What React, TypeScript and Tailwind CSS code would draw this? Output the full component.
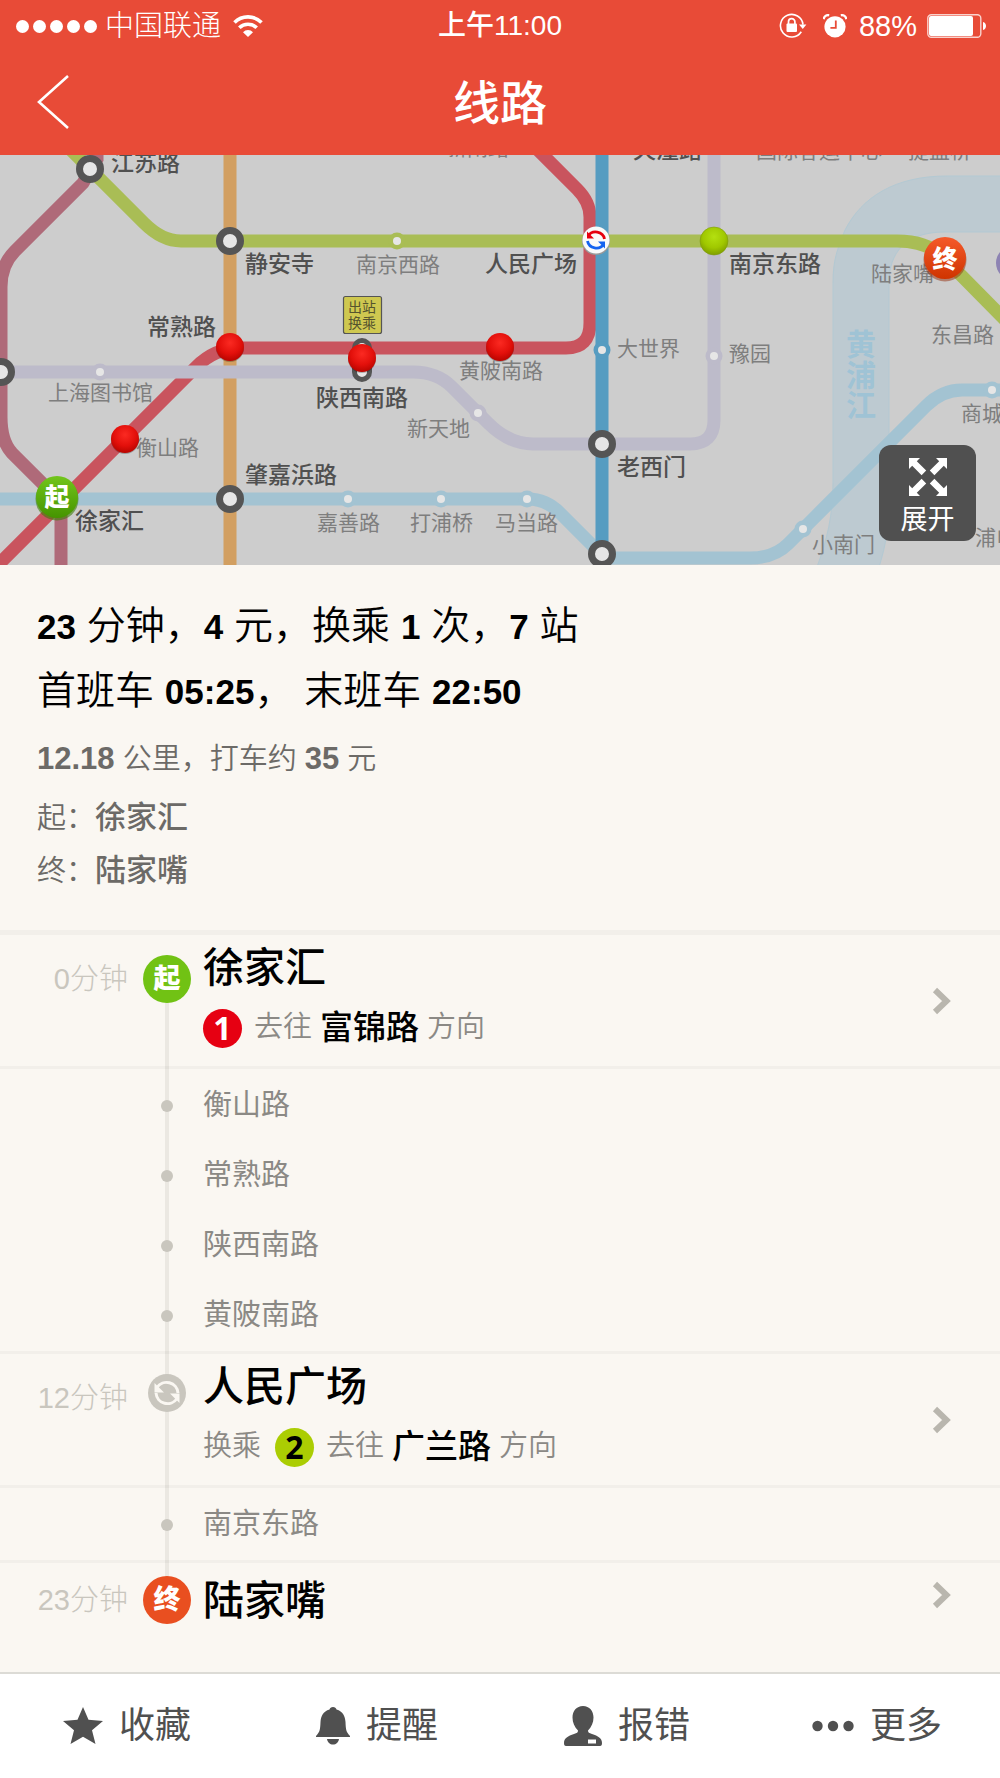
import type { ReactNode } from "react";

const GREEN = "#a9bd55";
const RED = "#c9545e";
const LAVENDER = "#bdbbca";
const SKY = "#a3c3d2";
const BLUE = "#569cc1";

const INTERCHANGES = [
  { x: 90, y: 14 },
  { x: 230, y: 86 },
  { x: 230, y: 344 },
  { x: 602, y: 289 },
  { x: 602, y: 399 },
  { x: 1, y: 217 },
];

const STATIONS = [
  { x: 397, y: 86, color: GREEN },
  { x: 100, y: 217, color: LAVENDER },
  { x: 478, y: 258, color: LAVENDER },
  { x: 714, y: 201, color: LAVENDER },
  { x: 348, y: 344, color: SKY },
  { x: 441, y: 344, color: SKY },
  { x: 527, y: 344, color: SKY },
  { x: 803, y: 374, color: SKY },
  { x: 992, y: 235, color: SKY },
  { x: 602, y: 195, color: BLUE },
];

const RED_BALLS = [
  { x: 125, y: 284 },
  { x: 230, y: 192 },
  { x: 362, y: 203 },
  { x: 500, y: 192 },
];

const MAJOR_LABELS = [
  { name: "江苏路", x: 111, y: 16 },
  { name: "静安寺", x: 245, y: 117 },
  { name: "常熟路", x: 147, y: 180 },
  { name: "陕西南路", x: 316, y: 251 },
  { name: "肇嘉浜路", x: 245, y: 328 },
  { name: "徐家汇", x: 75, y: 374 },
  { name: "人民广场", x: 485, y: 117 },
  { name: "南京东路", x: 729, y: 117 },
  { name: "老西门", x: 617, y: 320 },
  { name: "天潼路", x: 633, y: 3 },
];

const MINOR_LABELS = [
  { name: "新闸路", x: 446, y: 0 },
  { name: "国际客运中心", x: 756, y: 3 },
  { name: "提篮桥", x: 908, y: 3 },
  { name: "南京西路", x: 356, y: 117 },
  { name: "上海图书馆", x: 48, y: 245 },
  { name: "衡山路", x: 136, y: 300 },
  { name: "黄陂南路", x: 459, y: 223 },
  { name: "新天地", x: 407, y: 281 },
  { name: "嘉善路", x: 317, y: 375 },
  { name: "打浦桥", x: 410, y: 375 },
  { name: "马当路", x: 495, y: 375 },
  { name: "大世界", x: 617, y: 201 },
  { name: "豫园", x: 729, y: 206 },
  { name: "陆家嘴", x: 871, y: 126 },
  { name: "东昌路", x: 931, y: 187 },
  { name: "商城路", x: 961, y: 266 },
  { name: "小南门", x: 812, y: 397 },
  { name: "浦电路", x: 975, y: 390 },
];

function StatusBar() {
  return (
    <div className="grid h-[52px] grid-cols-[1fr_auto_1fr] items-center px-3.5 text-[29px] leading-none">
      <div className="flex items-center pl-0.5">
        <div className="flex gap-1">
          {[0, 1, 2, 3, 4].map((i) => (
            <span key={i} className="h-[13px] w-[13px] rounded-full bg-white" />
          ))}
        </div>
        <span className="ml-2 font-light">中国联通</span>
        <svg className="ml-3" width="30" height="22" viewBox="0 0 30 22" fill="none" stroke="#fff" strokeWidth="3.6">
          <path d="M1.5 7.5a19 19 0 0 1 27 0" />
          <path d="M6.3 12.8a12.3 12.3 0 0 1 17.4 0" />
          <path d="M10 17.2a7 7 0 0 1 10 0L15 22z" fill="#fff" stroke="none" />
        </svg>
      </div>
      <span className="text-[28px] font-medium">上午11:00</span>
      <div className="flex items-center justify-end">
        <svg width="28" height="26" viewBox="0 0 28 26" fill="none" stroke="#fff" strokeWidth="1.6">
          <path d="M22.3 18.8A11.3 11.3 0 1 1 24 11.6" />
          <path d="M20 11.5h7.4L23.8 16z" fill="#fff" stroke="none" />
          <rect x="7.5" y="10.5" width="10.5" height="8.5" rx="1" fill="#fff" stroke="none" />
          <path d="M9.5 11V8.8a3.2 3.2 0 0 1 6.4 0V11" strokeWidth="1.7" />
        </svg>
        <svg className="ml-4" width="24" height="24" viewBox="0 0 24 24">
          <circle cx="12" cy="12.8" r="10.6" fill="#fff" />
          <path d="M.6 5.2A5 5 0 0 1 6.2 1.2M17.8 1.2a5 5 0 0 1 5.6 4" fill="none" stroke="#fff" strokeWidth="2.4" />
          <path d="M12.8 6.5v7.3H7.4" fill="none" stroke="#e84b37" strokeWidth="1.8" />
        </svg>
        <span className="ml-3">88%</span>
        <svg className="ml-2.5" width="59" height="24" viewBox="0 0 59 24">
          <rect x=".8" y=".8" width="53" height="22.4" rx="3.5" fill="none" stroke="#fff" strokeOpacity=".75" strokeWidth="1.4" />
          <rect x="2" y="2" width="44" height="20" rx="2" fill="#fff" />
          <path d="M56 8c4 1 4 7 0 8z" fill="#fff" />
        </svg>
      </div>
    </div>
  );
}

function Header() {
  return (
    <header className="bg-[#e84b37] text-white">
      <StatusBar />
      <div className="grid h-[103px] grid-cols-[1fr_auto_1fr] items-center px-9">
        <button aria-label="返回" className="justify-self-start">
          <svg width="34" height="58" viewBox="0 0 34 58" fill="none" stroke="#fff" strokeWidth="2.6">
            <path d="M32 1 3 27l29 26" />
          </svg>
        </button>
        <h1 className="text-[47px] leading-none font-medium">线路</h1>
      </div>
    </header>
  );
}

function MetroMap() {
  return (
    <div className="relative h-[410px] overflow-hidden bg-[#cdcdcd]">
      <svg className="block h-full w-full" viewBox="0 0 1000 410" preserveAspectRatio="xMidYMid slice">
        <defs>
          <radialGradient id="redBall" cx="50%" cy="35%" r="65%">
            <stop offset="0" stopColor="#fb2a22" />
            <stop offset=".6" stopColor="#e3100b" />
            <stop offset="1" stopColor="#b80500" />
          </radialGradient>
          <radialGradient id="limeBall" cx="50%" cy="35%" r="65%">
            <stop offset="0" stopColor="#b4e010" />
            <stop offset=".6" stopColor="#a0c800" />
            <stop offset="1" stopColor="#7f9e00" />
          </radialGradient>
          <linearGradient id="startBall" x1="0" y1="0" x2="0" y2="1">
            <stop offset="0" stopColor="#72c51c" />
            <stop offset="1" stopColor="#459400" />
          </linearGradient>
          <linearGradient id="endBall" x1="0" y1="0" x2="0" y2="1">
            <stop offset="0" stopColor="#f55a2a" />
            <stop offset="1" stopColor="#cf3400" />
          </linearGradient>
        </defs>

        {/* river */}
        <path
          d="M1010 21H947C895 21 862 42 845 75 837 95 833 105 833 128V328C833 360 827 385 817 412H879C886 390 889 370 889 348V128C889 98 905 77 945 77H1010z"
          fill="#bdcad1"
          stroke="#b3c9d3"
        />
        <g fill="#9fc3d5" fontSize="30" fontWeight="700" textAnchor="middle">
          <text x="861" y="200">黄</text>
          <text x="861" y="231">浦</text>
          <text x="861" y="261">江</text>
        </g>

        {/* lines */}
        <g fill="none" strokeWidth="13">
          <path d="M97-10V4L83 28 15 96Q1 110 1 132V262Q1 286 12 298L61 347V420" stroke="#af6a79" />
          <path d="M230-10V420" stroke="#d29f61" />
          <path d="M-10 344H528Q546 344 560 358L605 403H750Q774 403 788 389L926 251Q942 235 962 235H1010" stroke={SKY} />
          <path d="M-12 420L196 212Q215 193 240 193H566Q590 193 590 168V62Q590 47 577 34L535-8" stroke={RED} />
          <path d="M0 217H413Q437 217 452 232L488 268Q509 289 533 289H690Q714 289 714 265V-10" stroke={LAVENDER} />
          <path d="M602-10V400" stroke={BLUE} />
          <path d="M66-10L144 68Q162 86 181 86H897Q926 86 942 101L1010 170" stroke={GREEN} />
        </g>
        <circle cx="1013" cy="108" r="17" fill="#8d83b3" />

        {/* stations */}
        {STATIONS.map((s) => (
          <g key={`${s.x}-${s.y}`}>
            <circle cx={s.x} cy={s.y} r="8.5" fill={s.color} />
            <circle cx={s.x} cy={s.y} r="4" fill="#e6e6e6" />
          </g>
        ))}
        {INTERCHANGES.map((s) => (
          <circle key={`${s.x}-${s.y}`} cx={s.x} cy={s.y} r="10.5" fill="#e6e6e6" stroke="#555" strokeWidth="7" />
        ))}
        <rect x="354.5" y="185.5" width="15" height="39" rx="7.5" fill="#e6e6e6" stroke="#555" strokeWidth="5" />

        <g fill="#505050" fontSize="23" fontWeight="500">
          {MAJOR_LABELS.map((l) => (
            <text key={l.name} x={l.x} y={l.y}>{l.name}</text>
          ))}
        </g>
        <g fill="#7e7e7e" fontSize="21">
          {MINOR_LABELS.map((l) => (
            <text key={l.name} x={l.x} y={l.y}>{l.name}</text>
          ))}
        </g>

        {/* out-of-station transfer tag */}
        <rect x="343.5" y="141.5" width="38" height="37" rx="2" fill="#cfc850" stroke="#555" strokeWidth="1.2" />
        <g fill="#55542e" fontSize="14" textAnchor="middle">
          <text x="362" y="157">出站</text>
          <text x="362" y="173">换乘</text>
        </g>

        {/* the chosen route */}
        {RED_BALLS.map((b) => (
          <g key={b.x}>
            <circle cx={b.x} cy={b.y + 1} r="14" fill="#000" fillOpacity=".25" />
            <circle cx={b.x} cy={b.y} r="14" fill="url(#redBall)" />
          </g>
        ))}
        <circle cx="714" cy="86" r="14" fill="url(#limeBall)" stroke="#7f9a10" strokeWidth=".6" />
        <circle cx="596" cy="86" r="14" fill="#999" />
        <circle cx="596" cy="85" r="13.5" fill="#fafafa" />
        <path d="M588 81a9 8.5 0 0 1 16.5 3" fill="none" stroke="#e6000f" strokeWidth="2.8" />
        <path d="M587 76.5v7h7z" fill="#e6000f" />
        <path d="M604 89a9 8.5 0 0 1-16.5-3" fill="none" stroke="#1463f0" strokeWidth="2.8" />
        <path d="M605 93.500v-7h-7z" fill="#1463f0" />
        <circle cx="57" cy="344" r="21.5" fill="#3d7d08" fillOpacity=".6" />
        <circle cx="57" cy="342" r="21" fill="url(#startBall)" />
        <circle cx="945" cy="105" r="21.5" fill="#96300e" fillOpacity=".5" />
        <circle cx="945" cy="103" r="21" fill="url(#endBall)" />
        <g fill="#fff" fontSize="25" fontWeight="900" textAnchor="middle">
          <text x="57" y="351">起</text>
          <text x="945" y="113">终</text>
        </g>
      </svg>

      <button className="absolute right-6 bottom-6 flex h-24 w-[97px] flex-col items-center justify-center gap-2 rounded-xl bg-[#505050] pt-2 text-[27px] leading-8 text-white">
        <svg width="38" height="38" viewBox="0 0 38 38" fill="#fff">
          {[0, 90, 180, 270].map((deg) => (
            <path key={deg} d="M0 0h11L7.800 3.200 17.200 12.600 12.600 17.200 3.200 7.800 0 11z" transform={`rotate(${deg} 19 19)`} />
          ))}
        </svg>
        展开
      </button>
    </div>
  );
}

function Num({ children }: { children: ReactNode }) {
  return <b className="text-[35px] font-bold">{children}</b>;
}

function Summary() {
  return (
    <section className="border-b-5 border-[#f2efea] px-[37px] pt-7 pb-[33px] text-[29px] font-[350] text-[#6c6a67]">
      <p className="h-[65px] text-[39px] leading-[65px] text-black">
        <Num>23</Num> 分钟，<Num>4</Num> 元，换乘 <Num>1</Num> 次，<Num>7</Num> 站
      </p>
      <p className="h-[65px] text-[39px] leading-[65px] text-black">
        首班车 <Num>05:25</Num>， 末班车 <Num>22:50</Num>
      </p>
      <p className="mt-2.5 h-[52px] leading-[52px]">
        <b className="text-[31px] font-bold">12.18</b> 公里，打车约 <b className="text-[31px] font-bold">35</b> 元
      </p>
      <p className="mt-1.5 h-[53px] leading-[53px]">
        起：<b className="text-[31px] font-medium">徐家汇</b>
      </p>
      <p className="h-[53px] leading-[53px]">
        终：<b className="text-[31px] font-medium">陆家嘴</b>
      </p>
    </section>
  );
}

function Pill({ children, className }: { children: ReactNode; className: string }) {
  return (
    <span className={`flex h-12 w-12 items-center justify-center rounded-full text-[27px] leading-none font-black text-white ${className}`}>
      {children}
    </span>
  );
}

function LineNo({ children, className }: { children: ReactNode; className: string }) {
  return (
    <span className={`flex h-[39px] w-[39px] shrink-0 items-center justify-center rounded-full font-['Noto_Sans',sans-serif] text-[32px] leading-none font-bold ${className}`}>
      {children}
    </span>
  );
}

function TransferIcon() {
  return (
    <svg className="mx-auto" width="38" height="38" viewBox="0 0 38 38">
      <circle cx="19" cy="19" r="19" fill="#c9c6be" />
      <g fill="none" stroke="#faf7f2" strokeWidth="3">
        <path d="M9 13.500a11.500 11.500 0 0 1 21 5.500" />
        <path d="M29 24.500a11.500 11.500 0 0 1-21-5.500" />
      </g>
      <path d="M6.500 9v9.500H16z" fill="#faf7f2" />
      <path d="M31.500 29V19.500H22z" fill="#faf7f2" />
    </svg>
  );
}

function Chevron() {
  return (
    <svg width="20" height="28" viewBox="0 0 20 28" fill="none" stroke="#b9b6ae" strokeWidth="6">
      <path d="M3 3l11.500 11L3 25" />
    </svg>
  );
}

interface StationRowProps {
  time: string;
  icon: ReactNode;
  name: string;
  last?: boolean;
  children?: ReactNode;
}

function StationRow({ time, icon, name, last, children }: StationRowProps) {
  return (
    <li className={last ? "h-[109px]" : "h-[134px] border-b-3 border-black/3"}>
      <a href="#" className="flex h-full">
        <span className={`w-32 shrink-0 text-right text-[29px] font-light text-[#c9c6be] ${last ? "leading-[74px]" : "leading-[88px]"}`}>
          {time}
        </span>
        <span className={`ml-[15px] w-12 shrink-0 ${last ? "pt-[13px]" : "pt-5"}`}>{icon}</span>
        <span className="ml-3 flex-1 text-[29px] font-[350] text-[#8b8985]">
          <span className={`block text-[41px] font-medium text-black ${last ? "leading-[76px]" : "leading-[66px]"}`}>{name}</span>
          {children && <span className="flex h-[54px] items-center">{children}</span>}
        </span>
        <span className={`mr-12 flex items-center ${last ? "h-16" : ""}`}>
          <Chevron />
        </span>
      </a>
    </li>
  );
}

function Stops({ names }: { names: string[] }) {
  return (
    <li className="border-b-3 border-black/3 pt-0.5">
      <ul>
        {names.map((name) => (
          <li key={name} className="flex h-[70px] items-center text-[29px] text-[#8b8985]">
            <span className="ml-[161px] h-3 w-3 rounded-full bg-[#c9c6be]" />
            <span className="ml-[30px]">{name}</span>
          </li>
        ))}
      </ul>
    </li>
  );
}

function Direction({ to }: { to: string }) {
  return (
    <>
      去往<span className="mx-2 text-[33px] font-medium text-black">{to}</span>方向
    </>
  );
}

function Route() {
  return (
    <div className="relative flex-1">
      <div className="absolute top-11 bottom-[72px] left-[165px] w-1 bg-[#ebe8e2]" />
      <ul className="relative">
        <StationRow time="0分钟" icon={<Pill className="bg-[#71c214]">起</Pill>} name="徐家汇">
          <LineNo className="mr-3 bg-[#e60012] text-white">1</LineNo>
          <Direction to="富锦路" />
        </StationRow>
        <Stops names={["衡山路", "常熟路", "陕西南路", "黄陂南路"]} />
        <StationRow time="12分钟" icon={<TransferIcon />} name="人民广场">
          换乘
          <LineNo className="mr-3 ml-3.5 bg-[#abcd03] text-black">2</LineNo>
          <Direction to="广兰路" />
        </StationRow>
        <Stops names={["南京东路"]} />
        <StationRow time="23分钟" icon={<Pill className="bg-[#e94f20]">终</Pill>} name="陆家嘴" last />
      </ul>
    </div>
  );
}

const ACTIONS = [
  {
    label: "收藏",
    icon: (
      <svg width="40" height="38" viewBox="0 0 40 38" fill="#505050">
        <path d="M20 0l5.500 12.800L40 14l-11 9.300L32.500 37 20 29.800 7.500 37 11 23.300 0 14l14.500-1.200z" />
      </svg>
    ),
  },
  {
    label: "提醒",
    icon: (
      <svg width="34" height="38" viewBox="0 0 34 38" fill="#505050">
        <path d="M17 0c2 0 3 1.200 3.500 2.500C27 4.500 29 9 29.500 15c.3 7 .5 10 4.500 14v1H0v-1c4-4 4.200-7 4.500-14C5 9 7 4.500 13.500 2.500 14 1.200 15 0 17 0z" />
        <path d="M11 32h12c-.5 3.500-3 5.500-6 5.500S11.500 35.500 11 32z" />
      </svg>
    ),
  },
  {
    label: "报错",
    icon: (
      <svg width="38" height="40" viewBox="0 0 38 40" fill="#505050">
        <path
          fillRule="evenodd"
          d="M19 0c6.500 0 10.500 5 10.500 11.500 0 5-2 9.500-5.500 13 0 2 1 2.500 4 3.500 6 2 10 4 10 9 0 2-.5 3-2 3H2c-1.500 0-2-1-2-3 0-5 4-7 10-9 3-1 4-1.500 4-3.500-3.500-3.500-5.500-8-5.500-13C8.500 5 12.500 0 19 0zM24 33.500v4h8v-4z"
        />
      </svg>
    ),
  },
  {
    label: "更多",
    icon: (
      <svg width="42" height="12" viewBox="0 0 42 12" fill="#505050">
        <circle cx="5.500" cy="6" r="5.200" />
        <circle cx="21" cy="6" r="5.200" />
        <circle cx="36.500" cy="6" r="5.200" />
      </svg>
    ),
  },
];

function ActionBar() {
  return (
    <nav className="grid h-[106px] grid-cols-4 border-t-2 border-[#dcdbd6] bg-white">
      {ACTIONS.map((a) => (
        <button key={a.label} className="flex items-center justify-center gap-4 pl-1 text-[36px] leading-none text-[#505050]">
          {a.icon}
          {a.label}
        </button>
      ))}
    </nav>
  );
}

export default function App() {
  return (
    <div className="flex min-h-screen flex-col bg-[#faf7f2] font-['Liberation_Sans','Noto_Sans_CJK_SC',sans-serif]">
      <Header />
      <MetroMap />
      <Summary />
      <Route />
      <ActionBar />
    </div>
  );
}
